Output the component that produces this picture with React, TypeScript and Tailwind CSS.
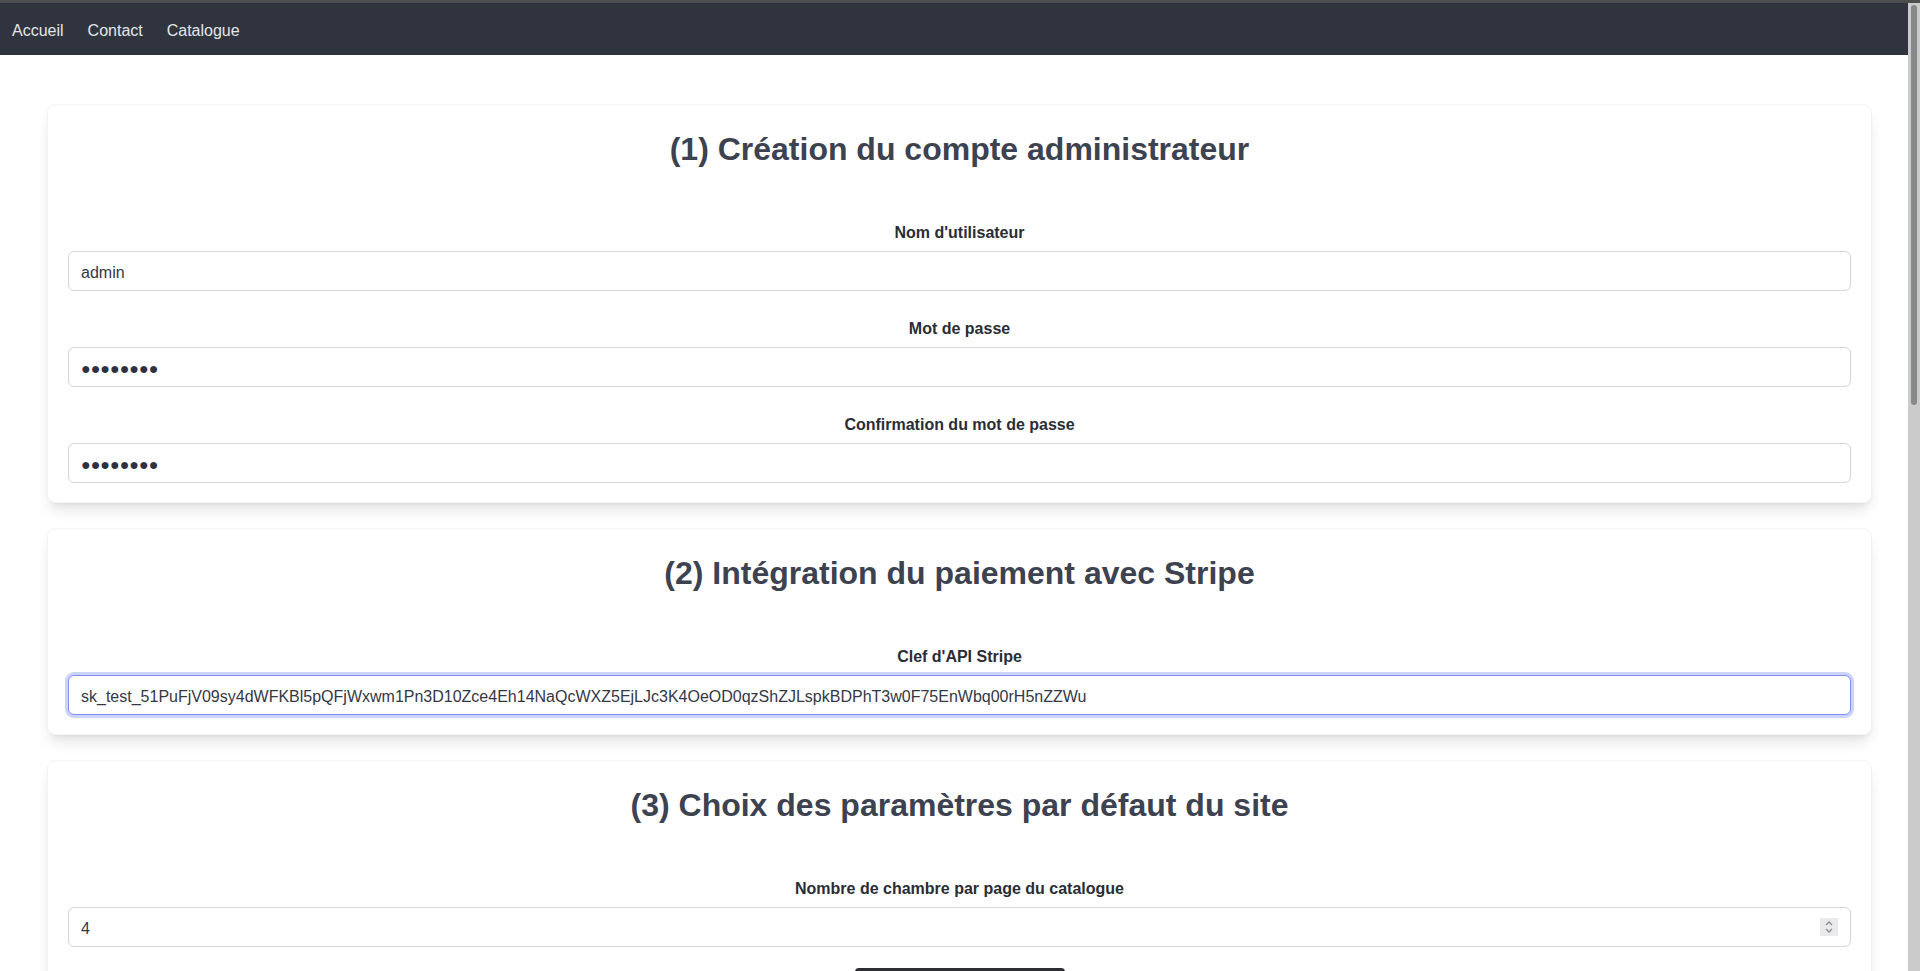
import { useEffect, useRef } from "react"

const STRIPE_KEY =
  "sk_test_51PuFjV09sy4dWFKBl5pQFjWxwm1Pn3D10Zce4Eh14NaQcWXZ5EjLJc3K4OeOD0qzShZJLspkBDPhT3w0F75EnWbq00rH5nZZWu"

// masked value as Chrome draws it (black circles)
const MASK = "\u25CF".repeat(8)

function Field({ label, children, first }: { label: string; children: React.ReactNode; first?: boolean }) {
  return (
    <div className={first ? "" : "mt-[26px]"}>
      <label className="block text-center text-[16px] leading-6 font-bold text-[#2a2d35] mb-[6px]">{label}</label>
      {children}
    </div>
  )
}

const inputClass =
  "block w-full h-10 rounded-md border border-[#d5d6dd] bg-white px-3 pt-[4px] text-[16px] text-[#343844] outline-none"

const passwordClass =
  "block w-full h-10 rounded-md border border-[#d5d6dd] bg-white px-3 pt-[3px] text-[16px] text-[#2e3240] outline-none"

function Card({ title, children }: { title: string; children: React.ReactNode }) {
  return (
    <section className="rounded-lg border border-gray-100 bg-white px-5 pt-5 pb-[19px] shadow-lg">
      <h2 className="text-center text-[32px] leading-[48px] font-bold text-[#3d4250] mb-12">{title}</h2>
      {children}
    </section>
  )
}

export default function App() {
  const stripeRef = useRef<HTMLInputElement>(null)

  useEffect(() => {
    const el = stripeRef.current
    if (el) {
      el.focus()
      el.setSelectionRange(el.value.length, el.value.length)
    }
  }, [])

  return (
    <div className="flex h-screen flex-col bg-white font-['Liberation_Sans',Arial,sans-serif]">
      <div className="h-[3px] shrink-0 bg-[#4d4d4d]" />
      <div className="flex min-h-0 flex-1">
        <div className="flex-1 overflow-hidden">
          {/* Navbar */}
          <nav className="flex h-[52px] items-center bg-[#30343e] pt-[3px]">
            <a href="#" className="px-3 text-[16px] text-[#e4e6ea]">Accueil</a>
            <a href="#" className="px-3 text-[16px] text-[#e4e6ea]">Contact</a>
            <a href="#" className="px-3 text-[16px] text-[#e4e6ea]">Catalogue</a>
          </nav>

          <main className="ml-[47px] flex w-[1825px] flex-col gap-[25px] pt-[49px] pb-10">
            <Card title="(1) Création du compte administrateur">
              <Field label="Nom d'utilisateur" first>
                <input type="text" defaultValue="admin" className={inputClass} />
              </Field>
              <Field label="Mot de passe">
                <input type="text" readOnly aria-label="Mot de passe" value={MASK} className={passwordClass} />
              </Field>
              <Field label="Confirmation du mot de passe">
                <input type="text" readOnly aria-label="Confirmation du mot de passe" value={MASK} className={passwordClass} />
              </Field>
            </Card>

            <Card title="(2) Intégration du paiement avec Stripe">
              <Field label="Clef d'API Stripe" first>
                <input
                  ref={stripeRef}
                  type="text"
                  defaultValue={STRIPE_KEY}
                  className="block w-full h-10 rounded-md border border-[#7f8ef2] bg-white px-3 pt-[4px] text-[16px] text-[#343844] caret-black outline-none ring-[3px] ring-[#ccd3fb]"
                />
              </Field>
            </Card>

            <Card title="(3) Choix des paramètres par défaut du site">
              <Field label="Nombre de chambre par page du catalogue" first>
                <div className="flex h-10 items-center rounded-md border border-[#d5d6dd] bg-white pl-3 pr-3">
                  <input
                    type="number"
                    defaultValue={4}
                    className="h-full flex-1 bg-transparent pt-[4px] text-[16px] text-[#343844] outline-none [appearance:textfield] [&::-webkit-inner-spin-button]:appearance-none"
                  />
                  <span className="flex h-[18px] w-[18px] flex-col items-center justify-center bg-[#e9e9ee]">
                    <svg width="10" height="14" viewBox="0 0 10 14" fill="none" stroke="#8b8b96" strokeWidth="1.3">
                      <path d="M2 5 L5 2 L8 5" />
                      <path d="M2 9 L5 12 L8 9" />
                    </svg>
                  </span>
                </div>
              </Field>
              <div className="mt-[21px] flex justify-center">
                <button className="h-10 w-[210px] rounded bg-[#2d2f34] text-[16px] font-bold text-white">
                  Enregistrer
                </button>
              </div>
            </Card>
          </main>
        </div>

        {/* scrollbar */}
        <div className="w-[12px] shrink-0 bg-[#cbcbcb] px-[3px] pt-[2px]">
          <div className="h-[400px] rounded-full bg-[#858989]" />
        </div>
      </div>
    </div>
  )
}
